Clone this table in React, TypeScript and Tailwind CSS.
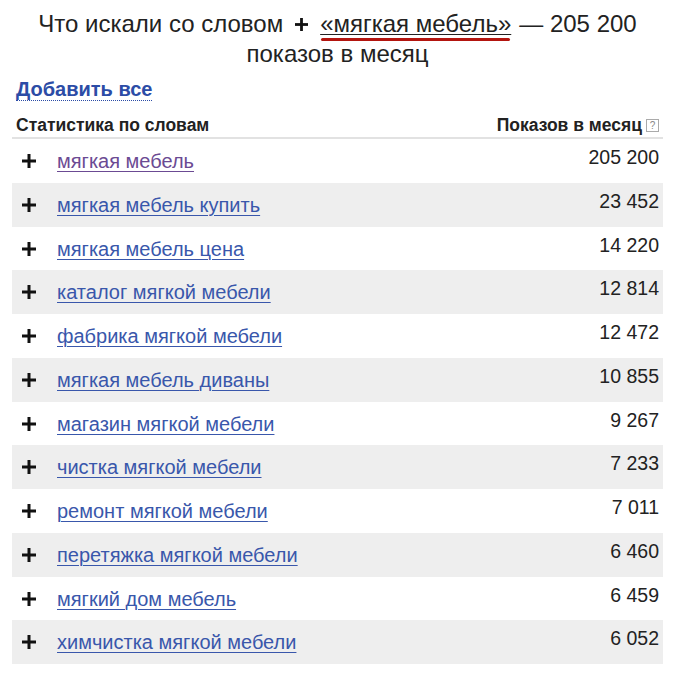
import React from 'react';

const rows: [string, string][] = [
  ['мягкая мебель', '205 200'],
  ['мягкая мебель купить', '23 452'],
  ['мягкая мебель цена', '14 220'],
  ['каталог мягкой мебели', '12 814'],
  ['фабрика мягкой мебели', '12 472'],
  ['мягкая мебель диваны', '10 855'],
  ['магазин мягкой мебели', '9 267'],
  ['чистка мягкой мебели', '7 233'],
  ['ремонт мягкой мебели', '7 011'],
  ['перетяжка мягкой мебели', '6 460'],
  ['мягкий дом мебель', '6 459'],
  ['химчистка мягкой мебели', '6 052'],
];

function Plus({ size = 14 }: { size?: number }) {
  return (
    <svg width={size} height={size} viewBox="0 0 14 14" className="shrink-0">
      <rect x="5.5" y="0" width="3" height="14" fill="#111" />
      <rect x="0" y="5.5" width="14" height="3" fill="#111" />
    </svg>
  );
}

export default function App() {
  return (
    <div className="w-[675px] h-[675px] bg-white text-[#222] font-['Liberation_Sans',Arial,sans-serif] overflow-hidden">
      {/* Title */}
      <div className="pt-[9px] text-center text-[24px] leading-[30px]">
        <div className="flex items-center justify-center">
          <span>Что искали со словом</span>
          <span className="mx-[12px] inline-flex"><Plus size={13} /></span>
          <span className="relative underline decoration-1 underline-offset-2">
            «мягкая мебель»
            <span className="absolute left-[1px] right-[1px] bottom-[-2px] h-[3.5px] rounded-full bg-[#b3150f]" />
          </span>
          <span className="ml-[8px]">— 205 200</span>
        </div>
        <div>показов в месяц</div>
      </div>

      {/* Add all */}
      <div className="px-[16px] mt-[9px]">
        <span className="text-[20px] font-bold text-[#2c4ca6] border-b border-dotted border-[#2c4ca6] leading-[22px]">
          Добавить все
        </span>
      </div>

      {/* Table */}
      <div className="mx-[12px] mt-[12px]">
        <div className="flex items-end justify-between px-[4px] pb-[2px] border-b-2 border-[#e2e2e2]">
          <span className="text-[17.5px] font-bold leading-[20px]">Статистика по словам</span>
          <span className="flex items-center gap-[4px] text-[17.5px] font-bold leading-[20px]">
            Показов в месяц
            <span className="w-[13px] h-[13px] border border-[#aaa] text-[10px] leading-[11px] text-[#888] text-center font-normal">?</span>
          </span>
        </div>
        {rows.map(([word, count], i) => (
          <div
            key={word}
            className={`flex items-start h-[43.75px] ${i % 2 === 1 ? 'bg-[#eeeeee]' : 'bg-white'}`}
          >
            <span className="ml-[10px] mt-[15px]"><Plus /></span>
            <a
              href="#"
              className={`ml-[21px] mt-[11px] text-[20px] leading-[22px] underline decoration-1 underline-offset-[3px] ${i === 0 ? 'text-[#6b4a93]' : 'text-[#3957ab]'}`}
            >
              {word}
            </a>
            <span className="ml-auto mr-[4px] mt-[7px] text-[19.5px] leading-[22px]">{count}</span>
          </div>
        ))}
      </div>
    </div>
  );
}
